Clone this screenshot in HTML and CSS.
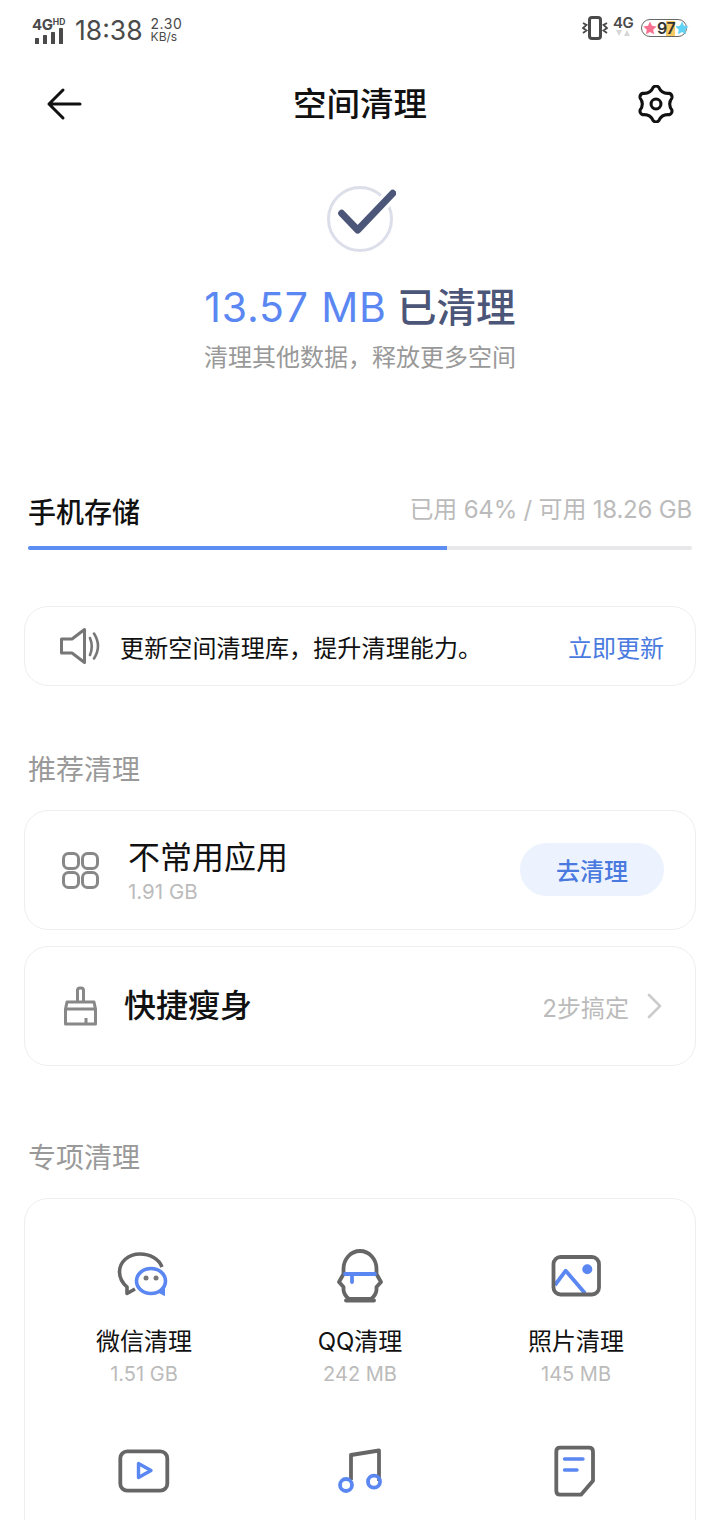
FILE: index.html
```html
<!DOCTYPE html>
<html lang="zh-CN">
<head>
<meta charset="utf-8">
<title>空间清理</title>
<link rel="stylesheet" href="styles.css">
</head>
<body>
<div class="page">
  <header class="status">
    <div class="status-left">
      <div class="net">
        <div class="net-label"><span class="net-4g">4G</span><span class="net-hd">HD</span></div>
        <svg class="bars" width="30" height="16" viewBox="0 0 30 16"><g fill="#4a4a4a"><rect x="1" y="10" width="4" height="6" rx=".5"/><rect x="9" y="7" width="4" height="9" rx=".5"/><rect x="17" y="4" width="4" height="12" rx=".5"/><rect x="25" y="0" width="4" height="16" rx=".5"/></g></svg>
      </div>
      <span class="time">18:38</span>
      <div class="speed"><span class="speed-num">2.30</span><span class="speed-unit">KB/s</span></div>
    </div>
    <div class="status-right">
      <svg width="26" height="24" viewBox="0 0 26 24" fill="none" stroke="#4a4a4a"><rect x="7.5" y="1.5" width="11" height="21" rx="2.5" stroke-width="3"/><path d="M1 7l3.5 2L1 12l3.5 2.500L1 17M25 7l-3.500 2 3.500 3-3.500 2.500L25 17" stroke-width="1.800"/></svg>
      <div class="sim"><span class="sim-4g">4G</span><svg width="16" height="6" viewBox="0 0 16 6" fill="#d6d6d6"><path d="M1 0h6L4 6zM9 6h6l-3-6z"/></svg></div>
      <div class="battery">
        <svg width="14" height="14" viewBox="0 0 24 24" fill="#f7708f"><path d="M12 1l3.400 7.300 7.900 1-5.800 5.500 1.500 7.900L12 18.800l-7 3.900 1.500-7.900L.7 9.300l7.900-1z"/></svg>
        <span class="battery-num">97</span>
        <svg width="14" height="14" viewBox="0 0 24 24" fill="#5fd2f5"><path d="M12 1l3.400 7.300 7.900 1-5.800 5.500 1.500 7.900L12 18.800l-7 3.900 1.500-7.900L.7 9.300l7.900-1z"/></svg>
      </div>
    </div>
  </header>

  <nav class="nav">
    <svg width="40" height="36" viewBox="0 0 40 36" fill="none" stroke="#111" stroke-width="3" stroke-linecap="round" stroke-linejoin="round"><path d="M36 18H5M19 4L5 18l14 14"/></svg>
    <h1 class="nav-title">空间清理</h1>
    <svg class="gear" width="38" height="38" viewBox="0 0 40 40" fill="none" stroke="#111" stroke-width="3.200" stroke-linejoin="round"><path d="M17.200 2.200Q20 0 22.800 2.200 26 9.600 34 8.700 37.300 10 36.800 13.500 32 20 36.800 26.500 37.300 30 34 31.300 26 30.400 22.800 37.800 20 40 17.200 37.800 14 30.400 6 31.300 2.700 30 3.200 26.500 8 20 3.200 13.500 2.700 10 6 8.700 14 9.600 17.200 2.200Z"/><circle cx="20" cy="20" r="5.200"/></svg>
  </nav>

  <section class="hero">
    <svg width="72" height="72" viewBox="0 0 72 72" fill="none" stroke-linecap="round" stroke-linejoin="round"><circle cx="36" cy="36" r="31.500" stroke="#dcdfe9" stroke-width="3"/><path d="M40 40L68.700 10.300" stroke="#fff" stroke-width="14"/><path d="M17.700 30.300L33.700 47 68.700 10.300" stroke="#4c5678" stroke-width="7"/></svg>
    <div class="hero-title"><span class="accent">13.57 MB</span> 已清理</div>
    <div class="hero-sub">清理其他数据，释放更多空间</div>
  </section>

  <section class="storage">
    <div class="storage-head">
      <span class="storage-name">手机存储</span>
      <span class="storage-info">已用 64% / 可用 18.26 GB</span>
    </div>
    <div class="track"><div class="fill" style="width:63.1%"></div></div>
  </section>

  <div class="card notice">
    <svg width="44" height="40" viewBox="0 0 44 40" fill="none" stroke="#777" stroke-linejoin="round" stroke-linecap="round"><path d="M3.500 13H14L26.500 3.500v33L14 27H3.500z" stroke-width="3"/><path d="M32 12q3.500 8.500 0 17M36 7.500q8 12.500 0 25" stroke-width="2.600"/></svg>
    <span class="notice-text">更新空间清理库，提升清理能力。</span>
    <span class="notice-link">立即更新</span>
  </div>

  <h2 class="section-title first">推荐清理</h2>
  <div class="card row row-a">
    <svg class="row-icon" width="40" height="40" viewBox="0 0 40 40" fill="none" stroke="#888" stroke-width="3"><rect x="3.500" y="3.500" width="15" height="15" rx="5"/><rect x="22.500" y="3.500" width="15" height="15" rx="5"/><rect x="3.500" y="22.500" width="15" height="15" rx="5"/><rect x="22.500" y="22.500" width="15" height="15" rx="5"/></svg>
    <div class="row-body">
      <div class="row-title">不常用应用</div>
      <div class="row-sub">1.91 GB</div>
    </div>
    <span class="pill">去清理</span>
  </div>
  <div class="card row row-b">
    <svg class="row-icon" width="40" height="40" viewBox="0 0 40 40" fill="none" stroke="#888" stroke-width="3" stroke-linejoin="round"><path d="M17.500 16V4.500q0-2.500 2.500-2.500h1q2.500 0 2.500 2.500V16"/><path d="M7 16h27l1.500 7v15h-30V23zM5.500 23h30M26 32v6"/></svg>
    <div class="row-title strong">快捷瘦身</div>
    <span class="row-hint">2步搞定</span>
    <svg class="row-chevron" width="18" height="26" viewBox="0 0 18 26" fill="none" stroke="#ccc" stroke-width="2.600" stroke-linecap="round" stroke-linejoin="round"><path d="M3 2l11 11L3 24"/></svg>
  </div>

  <h2 class="section-title second">专项清理</h2>
  <div class="card tools">
    <div class="tool">
      <svg width="64" height="64" viewBox="0 0 64 64" fill="none" stroke-width="3.600" stroke-linejoin="round"><path d="M50 23C47 15 38 10 28 10 16 10 7.500 18 7.500 28c0 6 3 11 7.500 15v6.500l8-4.500" stroke="#666"/><ellipse cx="39" cy="37" rx="14.500" ry="12.500" stroke="#5b87f2"/><path d="M46 48l6.500 3.500V44z" fill="#5b87f2" stroke="#5b87f2" stroke-width="1"/><circle cx="34" cy="34" r="2.500" fill="#777"/><circle cx="44" cy="34" r="2.500" fill="#777"/></svg>
      <div class="tool-name">微信清理</div>
      <div class="tool-size">1.51 GB</div>
    </div>
    <div class="tool">
      <svg width="64" height="64" viewBox="0 0 64 64" fill="none" stroke-width="3.800" stroke-linejoin="round" stroke-linecap="round"><path d="M15.500 30v-5A16.500 18 0 0 1 48.500 25v5l4.500 8-4.500 5v3q-.5 5-5.500 9H21q-5-4-5.500-9v-3L11 38z" stroke="#666"/><path d="M18 56.500h28" stroke="#666"/><path d="M17 30h30M24 30v8" stroke="#5b87f2"/></svg>
      <div class="tool-name">QQ清理</div>
      <div class="tool-size">242 MB</div>
    </div>
    <div class="tool">
      <svg width="64" height="64" viewBox="0 0 64 64" fill="none" stroke-width="3.800" stroke-linejoin="round"><path d="M11 41l10.700-14.300L41 49.300" stroke="#5b87f2"/><rect x="9.500" y="13" width="45.500" height="37.500" rx="7" stroke="#666"/><circle cx="43.300" cy="25.300" r="5" fill="#5b87f2"/></svg>
      <div class="tool-name">照片清理</div>
      <div class="tool-size">145 MB</div>
    </div>
    <div class="tool">
      <svg width="64" height="64" viewBox="0 0 64 64" fill="none" stroke-width="3.800" stroke-linejoin="round"><rect x="8.300" y="12.300" width="47" height="39.400" rx="7" stroke="#666"/><path d="M26.500 24.500v14L39 31.500z" stroke="#5b87f2" stroke-width="3.400"/></svg>
    </div>
    <div class="tool">
      <svg width="64" height="64" viewBox="0 0 64 64" fill="none" stroke-width="3.800" stroke-linejoin="round"><path d="M23 41V16l28-4.500V42" stroke="#666"/><circle cx="18" cy="46" r="6" stroke="#5b87f2"/><circle cx="46" cy="42.700" r="6" stroke="#5b87f2"/></svg>
    </div>
    <div class="tool">
      <svg width="64" height="64" viewBox="0 0 64 64" fill="none" stroke-width="3.800" stroke-linejoin="round" stroke-linecap="round"><path d="M16 8.700h29q4 0 4 4v29L37 55.700H16q-3.700 0-3.700-4V12.700q0-4 3.700-4z" stroke="#666"/><path d="M20.500 20h18.500M20.500 31h12.500" stroke="#5b87f2" stroke-width="3.400"/></svg>
    </div>
  </div>
</div>
</body>
</html>
```

FILE: styles.css
```css
* { box-sizing: border-box; }
html, body { margin: 0; padding: 0; background: #fff; }
body { width: 720px; height: 1520px; overflow: hidden; font-family: Inter, "Noto Sans CJK SC", sans-serif; color: #111; }
svg { display: block; flex: none; }
h1, h2 { margin: 0; font-weight: 400; }

.status { height: 56px; padding: 12px 33px 0 32px; display: flex; justify-content: space-between; align-items: flex-start; color: #4a4a4a; }
.status-left { display: flex; align-items: center; }
.net { width: 42px; display: flex; flex-direction: column; }
.net-label { display: flex; height: 15px; align-items: flex-start; }
.net-4g { font-size: 15px; line-height: 15px; font-weight: 700; letter-spacing: -.3px; }
.net-hd { font-size: 8.5px; line-height: 9px; font-weight: 700; margin-top: 1px; }
.bars { margin: -4px 0 0 2px; }
.time { font-family: Inter, sans-serif; font-size: 26.5px; line-height: 36px; margin: 0 8px 0 1px; }
.speed { display: flex; flex-direction: column; font-family: Inter, sans-serif; margin-top: -1px; }
.speed-num { font-size: 14px; letter-spacing: .5px; line-height: 14px; }
.speed-unit { font-size: 12px; line-height: 12px; }
.status-right { display: flex; align-items: center; padding-top: 4px; }
.sim { margin-left: 5px; width: 20px; display: flex; flex-direction: column; align-items: center; }
.sim-4g { font-size: 15px; line-height: 14px; font-weight: 600; letter-spacing: -.5px; margin-top: -5px; }
.battery { margin-left: 8px; width: 46px; height: 18px; border: 1.5px solid #666; border-radius: 9px; display: flex; align-items: center; justify-content: space-between; padding: 0 1px; }
.battery-num { font-size: 16px; line-height: 15px; font-weight: 600; letter-spacing: -.5px; background: linear-gradient(90deg, transparent 50%, #f6cb66 50%); color: #333; }

.nav { height: 96px; padding: 0 44px; display: flex; align-items: center; justify-content: space-between; }
.nav-title { font-size: 33.5px; font-weight: 500; line-height: 44px; }
.gear { margin: 0 1px; }

.hero { display: flex; flex-direction: column; align-items: center; padding-top: 31px; }
.hero-title { margin-top: 26px; font-size: 39.5px; line-height: 52px; color: #4c5678; font-weight: 500; }
.accent { color: #5b87f2; font-weight: 400; font-size: 41px; letter-spacing: .8px; }
.hero-sub { margin-top: 7px; font-size: 24px; line-height: 34px; color: #999; }

.storage { margin: 117px 28px 0; }
.storage-head { display: flex; justify-content: space-between; align-items: center; height: 40px; }
.storage-name { font-size: 28px; font-weight: 500; margin-top: -2px; }
.storage-info { font-size: 24px; letter-spacing: -.2px; color: #bbb; margin-bottom: 10px; }
.track { margin-top: 14px; height: 4px; background: #e8e8ea; border-radius: 2px; overflow: hidden; }
.fill { height: 100%; background: #5b8df2; }

.card { margin: 0 24px; background: #fff; border: 1px solid #eee; border-radius: 24px; }
.notice { margin-top: 56px; height: 80px; padding: 0 31px 0 33px; display: flex; align-items: center; }
.notice-text { margin-left: 18px; font-size: 24px; letter-spacing: .15px; }
.notice-link { margin-left: auto; font-size: 24px; color: #4a7ae0; }

.section-title { margin-left: 28px; font-size: 28px; line-height: 40px; color: #999; }
.section-title.first { margin-top: 64px; }
.section-title.second { margin-top: 72px; }

.row { height: 120px; display: flex; align-items: center; padding: 0 31px 0 35px; }
.row-a { margin-top: 20px; }
.row-b { margin-top: 16px; }
.row-body { margin-left: 28px; display: flex; flex-direction: column; }
.row-title { font-size: 32px; line-height: 42px; }
.row-title.strong { margin-left: 24px; font-weight: 500; }
.row-sub { font-size: 20.5px; line-height: 24px; color: #bbb; margin-top: 1px; }
.pill { margin: -1px 0 0 auto; width: 144px; height: 53px; border-radius: 27px; background: #edf3fe; color: #4a7ae0; font-size: 24px; font-weight: 500; display: flex; align-items: center; justify-content: center; }
.row-hint { margin-left: auto; font-size: 24px; color: #bbb; }
.row-chevron { margin-left: 17px; }

.tools { margin-top: 20px; height: 400px; padding: 45px 11px 0; display: grid; grid-template-columns: repeat(3, 216px); grid-auto-rows: 195px; justify-items: center; }
.tool { display: flex; flex-direction: column; align-items: center; }
.tool-name { margin-top: 16px; font-size: 24px; line-height: 36px; }
.tool-size { margin-top: 1px; font-size: 20px; line-height: 26px; color: #bbb; }
```
